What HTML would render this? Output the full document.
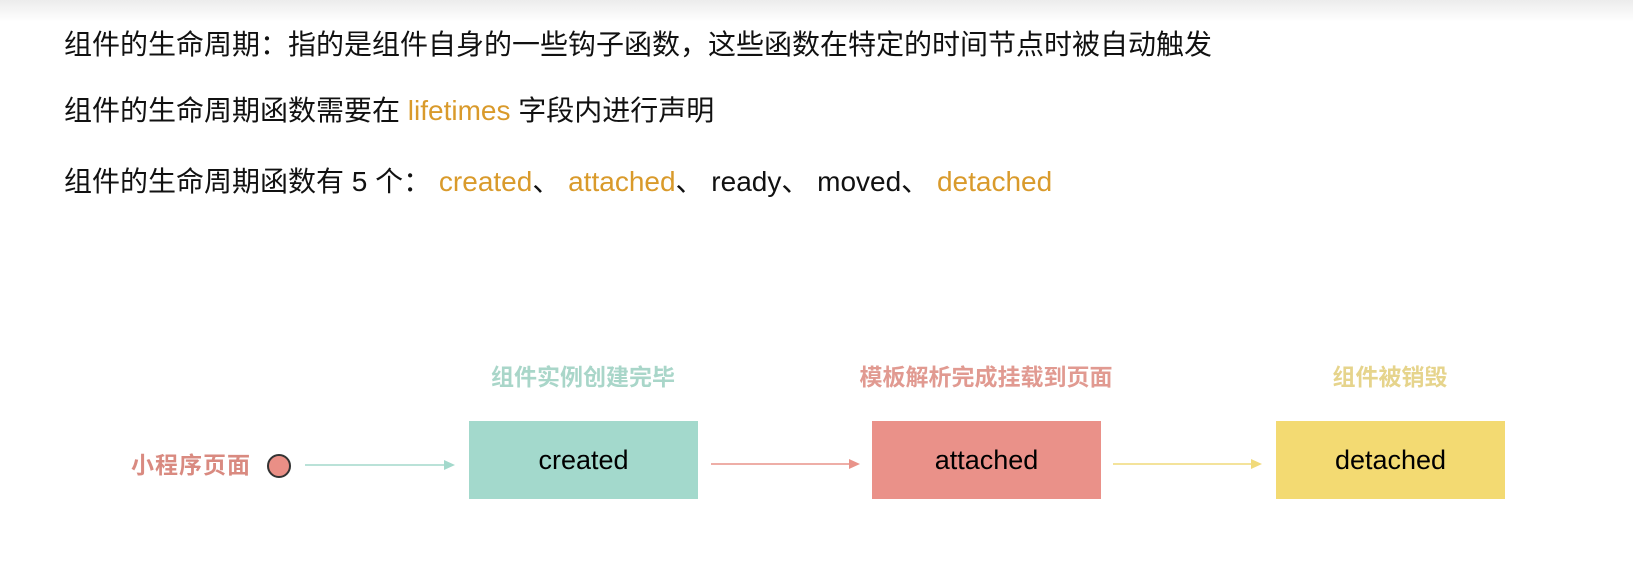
<!DOCTYPE html>
<html><head><meta charset="utf-8"><style>
body{margin:0;width:1633px;height:579px;background:#fff;position:relative;overflow:hidden;font-family:"Liberation Sans","Noto Sans CJK SC",sans-serif;}
.top{position:absolute;left:0;top:0;width:1633px;height:22px;background:linear-gradient(#ececec,#fff);}
.l{position:absolute;left:64px;font-size:28px;letter-spacing:0;color:#111;white-space:nowrap;line-height:32px;}
.o{color:#d99a2b}
.lab{position:absolute;font-size:23px;font-weight:bold;text-align:center;width:320px;line-height:28px;}
.box{position:absolute;top:421px;width:229px;height:78px;display:flex;align-items:center;justify-content:center;font-size:27px;color:#000;}
</style></head><body>
<div class="top"></div>
<div class="l" style="top:29px">组件的生命周期：指的是组件自身的一些钩子函数，这些函数在特定的时间节点时被自动触发</div>
<div class="l" style="top:95px">组件的生命周期函数需要在 <span class="o">lifetimes</span> 字段内进行声明</div>
<div class="l" style="top:166px">组件的生命周期函数有 5 个： <span class="o">created</span>、 <span class="o">attached</span>、 ready、 moved、 <span class="o">detached</span></div>

<div class="lab" style="left:423px;top:363px;color:#a9d6c9">组件实例创建完毕</div>
<div class="lab" style="left:826px;top:363px;color:#e19a91">模板解析完成挂载到页面</div>
<div class="lab" style="left:1230px;top:363px;color:#e6d48c">组件被销毁</div>

<div style="position:absolute;left:131px;top:451px;font-size:23px;line-height:28px;color:#d98a80;font-weight:bold;letter-spacing:1px">小程序页面</div>
<div style="position:absolute;left:267px;top:454px;width:20px;height:20px;border-radius:50%;background:#ea8f86;border:2px solid #333"></div>

<svg style="position:absolute;left:0;top:0" width="1633" height="579">
<line x1="305" y1="465" x2="446" y2="465" stroke="#a3d9cc" stroke-width="1.5"/><polygon points="455,465 444,460 444,470" fill="#a3d9cc"/>
<line x1="711" y1="464" x2="851" y2="464" stroke="#e9938a" stroke-width="1.5"/><polygon points="860,464 849,459 849,469" fill="#e9938a"/>
<line x1="1113" y1="464" x2="1253" y2="464" stroke="#f1da7a" stroke-width="1.5"/><polygon points="1262,464 1251,459 1251,469" fill="#f1da7a"/>
</svg>

<div class="box" style="left:469px;background:#a3d9cc">created</div>
<div class="box" style="left:872px;background:#ea9189">attached</div>
<div class="box" style="left:1276px;background:#f3da72">detached</div>
</body></html>
